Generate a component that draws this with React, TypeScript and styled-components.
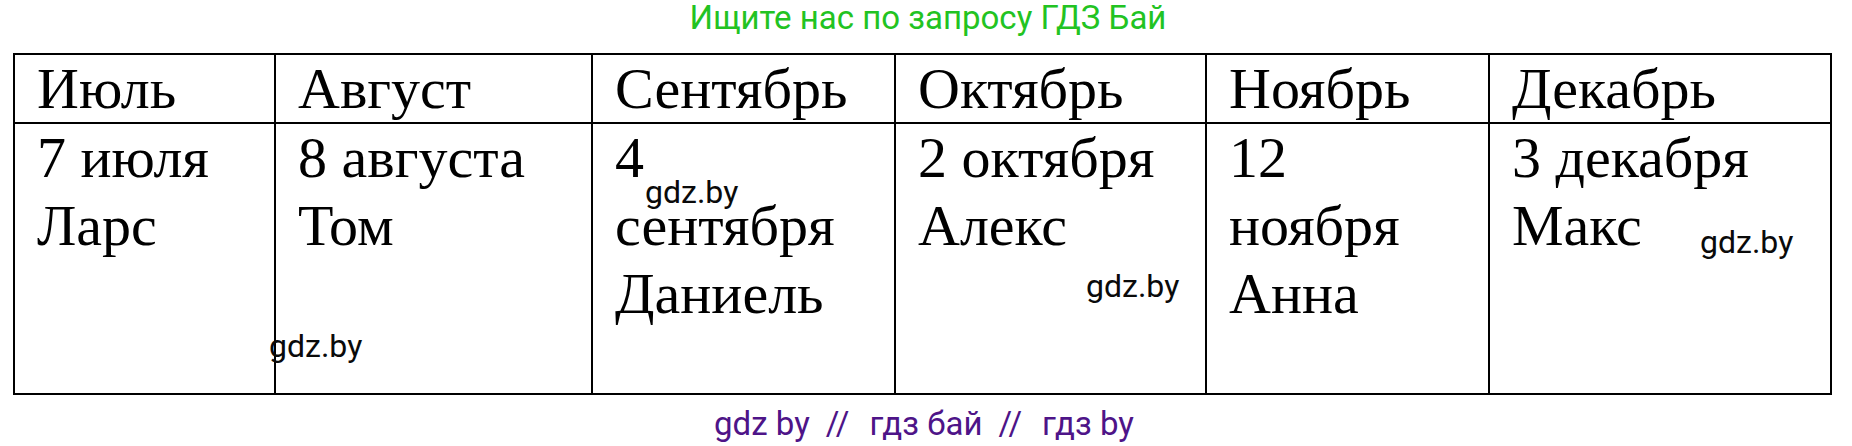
import React from "react";
import styled, { createGlobalStyle } from "styled-components";

const GlobalStyle = createGlobalStyle`
  html, body { margin: 0; padding: 0; background: #ffffff; }
  body { font-family: "Liberation Serif", "Times New Roman", serif; }
`;

const Page = styled.div`
  position: relative;
  width: 1852px;
  height: 446px;
  overflow: hidden;
  background: #ffffff;
`;

const TopNote = styled.div`
  box-sizing: border-box;
  font-family: Roboto, "Noto Sans", sans-serif;
  font-size: 33px;
  line-height: 36px;
  color: #22c322;
  text-align: center;
  padding-left: 4px;
  height: 53px;
`;

const Table = styled.div`
  display: grid;
  grid-template-columns: 261px 317px 303px 311px 283px 342px;
  grid-template-rows: 69px 271px;
  width: max-content;
  margin-left: 13px;
  border-top: 2px solid #000;
  border-left: 2px solid #000;
`;

const Cell = styled.div`
  box-sizing: border-box;
  border-right: 2px solid #000;
  border-bottom: 2px solid #000;
  padding: 0 20px 0 22px;
  font-family: "Liberation Serif", "Times New Roman", serif;
  font-size: 58px;
  line-height: 68px;
  color: #000;
  white-space: nowrap;
  overflow: hidden;
`;

const Line = styled.div``;

const BottomNote = styled.div`
  margin-top: 12px;
  padding-right: 4px;
  font-family: Roboto, "Noto Sans", sans-serif;
  font-size: 33px;
  line-height: 33px;
  color: #4e1488;
  text-align: center;
  white-space: pre;
`;

const Sep = styled.span`
  margin: 0 20px 0 16px;
`;

const Watermark = styled.span<{ $x: number; $y: number }>`
  position: absolute;
  left: ${(p) => p.$x}px;
  top: ${(p) => p.$y}px;
  font-family: Roboto, "Noto Sans", sans-serif;
  font-size: 32px;
  line-height: 32px;
  color: #0a0a0a;
  white-space: nowrap;
`;

const months = [
  { title: "Июль", lines: ["7 июля", "Ларс"] },
  { title: "Август", lines: ["8 августа", "Том"] },
  { title: "Сентябрь", lines: ["4", "сентября", "Даниель"] },
  { title: "Октябрь", lines: ["2 октября", "Алекс"] },
  { title: "Ноябрь", lines: ["12", "ноября", "Анна"] },
  { title: "Декабрь", lines: ["3 декабря", "Макс"] },
];

const marks = [
  { x: 269, y: 330 },
  { x: 645, y: 176 },
  { x: 1086, y: 270 },
  { x: 1700, y: 226 },
];

export default function App() {
  return (
    <Page>
      <GlobalStyle />
      <TopNote>Ищите нас по запросу ГДЗ Бай</TopNote>
      <Table>
        {months.map((m) => (
          <Cell key={m.title}>{m.title}</Cell>
        ))}
        {months.map((m) => (
          <Cell key={m.title + "-body"}>
            {m.lines.map((l) => (
              <Line key={l}>{l}</Line>
            ))}
          </Cell>
        ))}
      </Table>
      <BottomNote>
        gdz by<Sep>//</Sep>гдз бай<Sep>//</Sep>гдз by
      </BottomNote>
      {marks.map((p, i) => (
        <Watermark key={i} $x={p.x} $y={p.y}>
          gdz.by
        </Watermark>
      ))}
    </Page>
  );
}
